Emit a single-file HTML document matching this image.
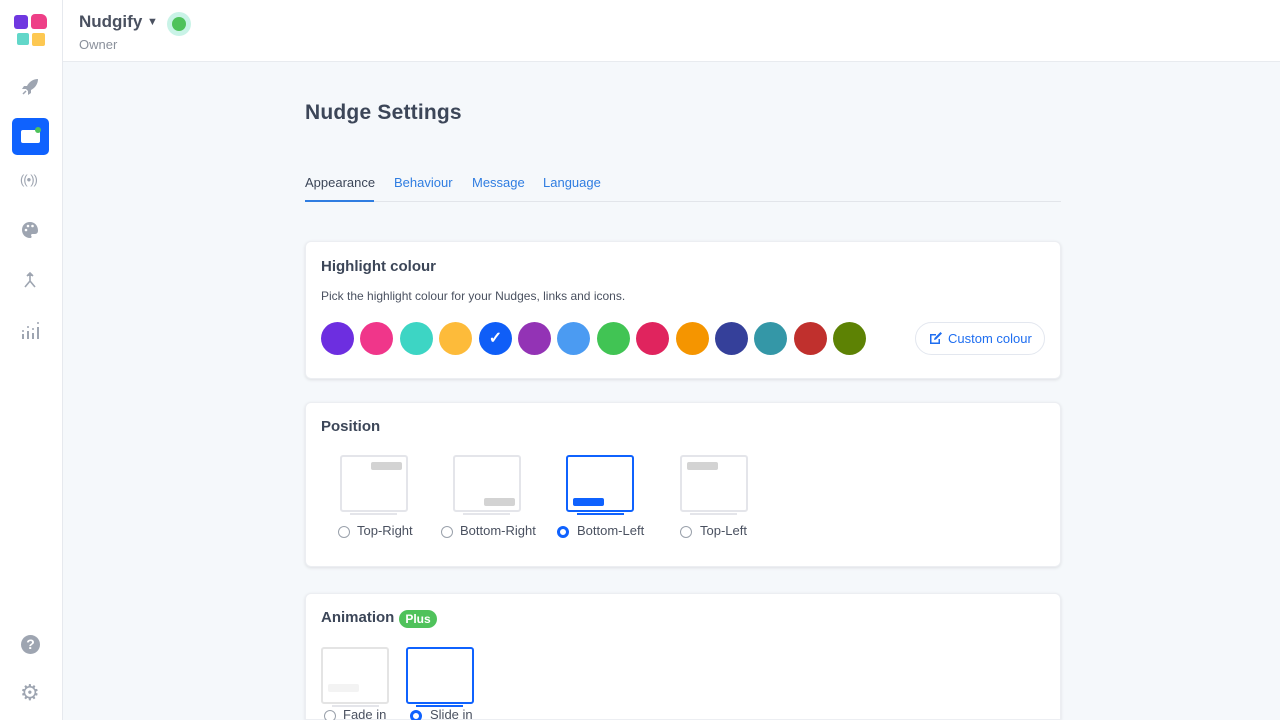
<!DOCTYPE html>
<html style="overflow:hidden;height:720px"><head><meta charset="utf-8"><style>
*{box-sizing:border-box;margin:0;padding:0}
body{width:1280px;height:720px;overflow:hidden;background:#f5f8fb;font-family:"Liberation Sans",sans-serif;color:#3c4658;position:relative}
.side{position:absolute;left:0;top:0;width:63px;height:720px;background:#fff;border-right:1px solid #e6e9ee}
.hdr{position:absolute;left:63px;top:0;right:0;height:62px;background:#fff;border-bottom:1px solid #e8ebef}
.abs{position:absolute}
.card{position:absolute;left:305px;width:756px;background:#fff;border-radius:6px;box-shadow:0 1px 3px rgba(0,0,0,.1);border:1px solid #eceef2}
.sw{position:absolute;top:322px;width:33px;height:33px;border-radius:50%}
.mon{position:absolute;width:68px;height:57px;border:2px solid #e4e5ea;border-radius:3px;background:#fff}
.mon .bar{position:absolute;width:31px;height:8px;background:#d3d3d3;border-radius:2px}
.stand{position:absolute;height:2px;width:47px;background:#e4e5ea}
.rad{position:absolute;width:12px;height:12px;border-radius:50%;border:1px solid #9aa1ab;background:#fff}
.rad.on{border:3.5px solid #0f62fe}
.lbl{position:absolute;font-size:13px;color:#4a5160}
.ic{position:absolute;left:21px;fill:#9ea5b1}
</style></head><body>
<div class="side">
 <div class="abs" style="left:14px;top:15px;width:14px;height:14px;background:#6f38e0;border-radius:3px"></div>
 <div class="abs" style="left:31px;top:14px;width:16px;height:15px;background:#ee3f87;border-radius:4px 6px 3px 3px"></div>
 <div class="abs" style="left:17px;top:33px;width:12px;height:12px;background:#62d7c9;border-radius:2px"></div>
 <div class="abs" style="left:32px;top:33px;width:13px;height:13px;background:#fdc852;border-radius:2px"></div>
 <svg class="ic" style="top:78px" width="18" height="18" viewBox="0 0 18 18"><path d="M17 1C12 1 8 4 6 8L3 8 1 11 5 11 7 13 7 17 10 15 10 12C14 10 17 6 17 1Z"/><path d="M2 16L5 13" stroke="#9ea5b1" stroke-width="1.5"/></svg>
 <div class="abs" style="left:12px;top:118px;width:37px;height:37px;background:#0f62fe;border-radius:5px"></div>
 <div class="abs" style="left:21px;top:130px;width:19px;height:13px;background:#fff;border-radius:2px"></div>
 <div class="abs" style="left:35px;top:127px;width:6px;height:6px;background:#4fc25b;border-radius:50%"></div>
 <div class="abs" style="left:20px;top:172px;font-size:13px;color:#9ea5b1;letter-spacing:-1px">((•))</div>
 <svg class="ic" style="top:221px" width="18" height="18" viewBox="0 0 18 18"><path d="M9 1C4 1 1 4.5 1 9s3.5 8 8 8c1.5 0 2-1 1.3-2-.6-1 0-2 1.2-2H14c2 0 3-1.5 3-3.5C17 4.5 13.5 1 9 1Z"/><circle cx="5" cy="9" r="1.3" fill="#fff"/><circle cx="7" cy="5" r="1.3" fill="#fff"/><circle cx="11.5" cy="5" r="1.3" fill="#fff"/></svg>
 <svg class="ic" style="top:271px" width="18" height="18" viewBox="0 0 18 18" fill="none" stroke="#9ea5b1" stroke-width="1.6"><path d="M9 2V10M6 5L9 2 12 5M9 10L4 16M9 10L14 16"/></svg>
 <svg class="ic" style="top:321px" width="20" height="20" viewBox="0 0 20 20"><rect x="1" y="13" width="2" height="5"/><rect x="6" y="10" width="2" height="8"/><rect x="11" y="12" width="2" height="6"/><rect x="16" y="6" width="2" height="12"/><circle cx="2" cy="10" r="1"/><circle cx="7" cy="6" r="1"/><circle cx="12" cy="8" r="1"/><circle cx="17" cy="2" r="1"/></svg>
 <div class="abs" style="left:21px;top:635px;width:19px;height:19px;border-radius:50%;background:#9ea5b1;color:#fff;font-size:14px;font-weight:bold;text-align:center;line-height:19px">?</div>
 <div class="abs" style="left:20px;top:682px;font-size:22px;color:#9ea5b1;line-height:22px">⚙</div>
</div>
<div class="hdr">
 <div class="abs" style="left:16px;top:12px;font-size:17px;font-weight:bold;color:#4a5160">Nudgify <span style="font-size:11px;position:relative;top:-2px">▼</span></div>
 <div class="abs" style="left:16px;top:37px;font-size:13px;color:#8a909b">Owner</div>
 <div class="abs" style="left:104px;top:12px;width:24px;height:24px;border-radius:50%;background:#c9f3e7"></div>
 <div class="abs" style="left:109px;top:17px;width:14px;height:14px;border-radius:50%;background:#4fc25b"></div>
</div>
<div class="abs" style="left:305px;top:101px;font-size:21px;font-weight:bold;color:#3c4658;letter-spacing:0.2px">Nudge Settings</div>
<div class="abs" style="left:305px;top:175px;font-size:13px;color:#3c4658">Appearance</div>
<div class="abs" style="left:394px;top:175px;font-size:13px;color:#2f7de1">Behaviour</div>
<div class="abs" style="left:472px;top:175px;font-size:13px;color:#2f7de1">Message</div>
<div class="abs" style="left:543px;top:175px;font-size:13px;color:#2f7de1">Language</div>
<div class="abs" style="left:305px;top:201px;width:756px;height:1px;background:#e2e5ea"></div>
<div class="abs" style="left:305px;top:200px;width:69px;height:2px;background:#2f7de1"></div>

<div class="card" style="top:241px;height:138px"></div>
<div class="abs" style="left:321px;top:258px;font-size:15px;font-weight:bold">Highlight colour</div>
<div class="abs" style="left:321px;top:289px;font-size:12px;color:#4a5160">Pick the highlight colour for your Nudges, links and icons.</div>
<div class="sw" style="left:321px;background:#6d2ee0"></div>
<div class="sw" style="left:360px;background:#f0368a"></div>
<div class="sw" style="left:400px;background:#3dd5c4"></div>
<div class="sw" style="left:439px;background:#fdbb3a"></div>
<div class="sw" style="left:479px;background:#0f5ef7;color:#fff;text-align:center;line-height:33px;font-size:16px;font-weight:bold">✓</div>
<div class="sw" style="left:518px;background:#9333b5"></div>
<div class="sw" style="left:557px;background:#4b9bf2"></div>
<div class="sw" style="left:597px;background:#41c454"></div>
<div class="sw" style="left:636px;background:#e0245e"></div>
<div class="sw" style="left:676px;background:#f59500"></div>
<div class="sw" style="left:715px;background:#35409a"></div>
<div class="sw" style="left:754px;background:#3497a7"></div>
<div class="sw" style="left:794px;background:#c0302d"></div>
<div class="sw" style="left:833px;background:#5d8204"></div>
<div class="abs" style="left:915px;top:322px;width:130px;height:33px;border:1px solid #e3e7ef;border-radius:17px;font-size:13px;color:#1f6ef0;line-height:31px;padding-left:32px">Custom colour</div>
<svg class="abs" style="left:929px;top:331px" width="14" height="14" viewBox="0 0 14 14"><path d="M1 3h6v1.5H2.5v7h7V8H11v5H1Z" fill="#1f6ef0"/><path d="M5 9L5.5 7 11.5 1 13 2.5 7 8.5Z" fill="#1f6ef0"/></svg>

<div class="card" style="top:402px;height:165px"></div>
<div class="abs" style="left:321px;top:418px;font-size:15px;font-weight:bold">Position</div>
<div class="mon" style="left:340px;top:455px"><div class="bar" style="right:4px;top:5px"></div></div><div class="stand" style="left:350px;top:513px"></div>
<div class="rad" style="left:338px;top:526px"></div><div class="lbl" style="left:357px;top:523px">Top-Right</div>
<div class="mon" style="left:453px;top:455px"><div class="bar" style="right:4px;bottom:4px"></div></div><div class="stand" style="left:463px;top:513px"></div>
<div class="rad" style="left:441px;top:526px"></div><div class="lbl" style="left:460px;top:523px">Bottom-Right</div>
<div class="mon" style="left:566px;top:455px;border-color:#0f62fe"><div class="bar" style="left:5px;bottom:4px;background:#0f62fe"></div></div><div class="stand" style="left:577px;top:513px;background:#0f62fe"></div>
<div class="rad on" style="left:557px;top:526px"></div><div class="lbl" style="left:577px;top:523px">Bottom-Left</div>
<div class="mon" style="left:680px;top:455px"><div class="bar" style="left:5px;top:5px"></div></div><div class="stand" style="left:690px;top:513px"></div>
<div class="rad" style="left:680px;top:526px"></div><div class="lbl" style="left:700px;top:523px">Top-Left</div>

<div class="card" style="top:593px;height:140px;border-bottom-left-radius:0;border-bottom-right-radius:0;height:127px"></div>
<div class="abs" style="left:321px;top:609px;font-size:15px;font-weight:bold">Animation</div>
<div class="abs" style="left:399px;top:610px;width:38px;height:18px;border-radius:9px;background:#4fc25b;color:#fff;font-size:12px;font-weight:bold;text-align:center;line-height:18px">Plus</div>
<div class="mon" style="left:321px;top:647px;border-color:#e4e4e4"><div class="bar" style="left:5px;bottom:10px;background:#f3f3f3"></div></div><div class="stand" style="left:332px;top:705px"></div>
<div class="rad" style="left:324px;top:710px"></div><div class="lbl" style="left:343px;top:707px">Fade in</div>
<div class="mon" style="left:406px;top:647px;border-color:#0f62fe"></div><div class="stand" style="left:416px;top:705px;background:#0f62fe"></div>
<div class="rad on" style="left:410px;top:710px"></div><div class="lbl" style="left:430px;top:707px">Slide in</div>
</body></html>
